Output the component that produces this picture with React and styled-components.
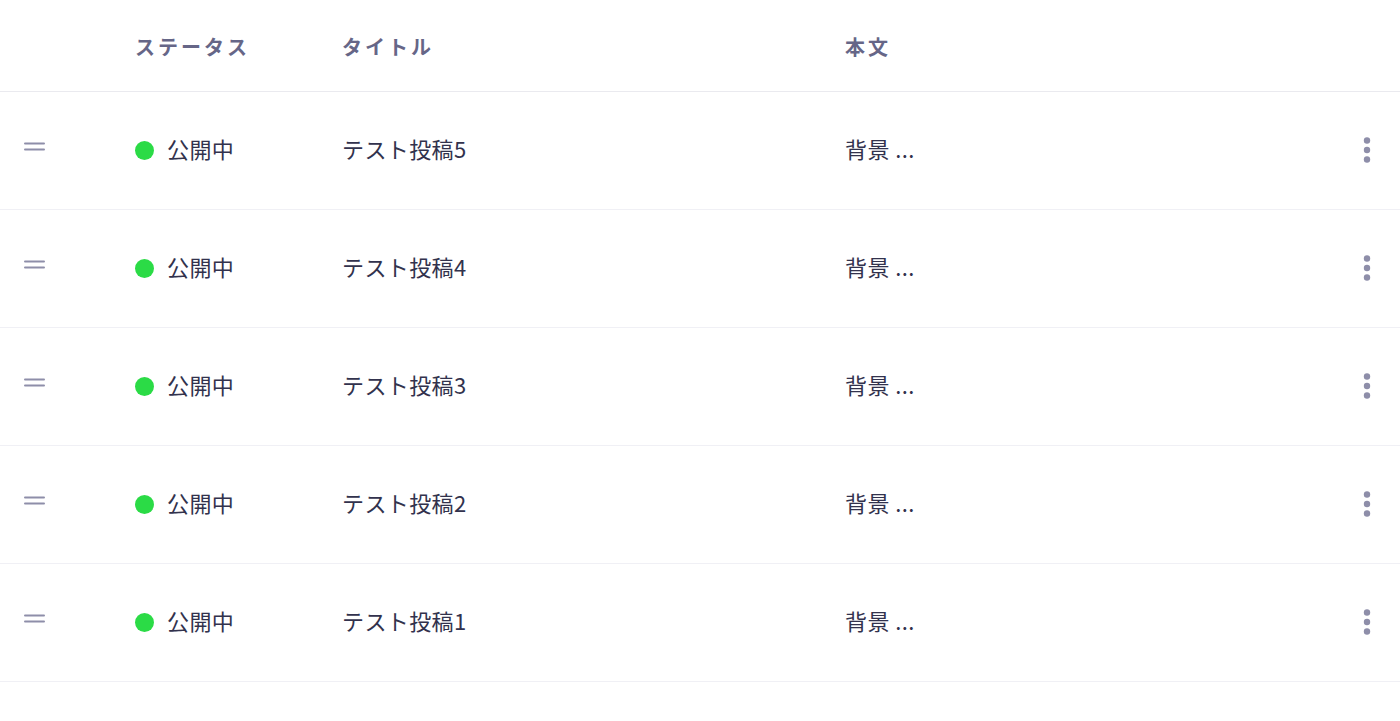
import React from "react";
import styled, { createGlobalStyle } from "styled-components";

const Global = createGlobalStyle`
  html, body { margin: 0; padding: 0; background: #ffffff; }
  body { font-family: "Noto Sans CJK JP", "Noto Sans", sans-serif; }
`;

const Table = styled.div`
  width: 1400px;
  display: flex;
  flex-direction: column;
`;

const cols = "135px 207px 503px 1fr 37px";

const HeaderRow = styled.div`
  display: grid;
  grid-template-columns: ${cols};
  align-items: center;
  height: 91px;
  border-bottom: 1px solid #eaeaef;
`;

const HeadCell = styled.div`
  font-size: 20px;
  font-weight: 700;
  color: #666687;
  letter-spacing: 3px;
  line-height: 1;
  padding-top: 2px;
`;

const Row = styled.div`
  display: grid;
  grid-template-columns: ${cols};
  align-items: center;
  height: 117px;
  border-bottom: 1px solid #f0f0f5;
`;

const DragCell = styled.div`
  padding-left: 24px;
  display: flex;
  align-items: center;
  margin-top: -8px;
`;

const Cell = styled.div`
  font-size: 22px;
  color: #32324d;
  line-height: 1;
  letter-spacing: 0.4px;
  display: flex;
  align-items: center;
  gap: 13px;
  margin-top: -6px;
`;

const Dot = styled.span`
  width: 19px;
  height: 19px;
  border-radius: 50%;
  background: #2bdb46;
  flex: none;
  margin-top: 6px;
`;

const MenuCell = styled.div`
  display: flex;
  justify-content: flex-start;
  margin-top: -2px;
`;

const DragIcon = () => (
  <svg width="21" height="9" viewBox="0 0 21 9">
    <rect x="0" y="0.5" width="21" height="2" rx="1" fill="#8e8ea9" />
    <rect x="0" y="6.5" width="21" height="2" rx="1" fill="#8e8ea9" />
  </svg>
);

const Kebab = () => (
  <svg width="8" height="26" viewBox="0 0 8 26">
    <circle cx="4" cy="3.5" r="3.2" fill="#8e8ea9" />
    <circle cx="4" cy="13" r="3.2" fill="#8e8ea9" />
    <circle cx="4" cy="22.5" r="3.2" fill="#8e8ea9" />
  </svg>
);

const posts = [5, 4, 3, 2, 1];

export default function App() {
  return (
    <>
      <Global />
      <Table>
        <HeaderRow>
          <div />
          <HeadCell>ステータス</HeadCell>
          <HeadCell>タイトル</HeadCell>
          <HeadCell>本文</HeadCell>
          <div />
        </HeaderRow>
        {posts.map((n) => (
          <Row key={n}>
            <DragCell>
              <DragIcon />
            </DragCell>
            <Cell>
              <Dot />
              公開中
            </Cell>
            <Cell>テスト投稿{n}</Cell>
            <Cell>背景 ...</Cell>
            <MenuCell>
              <Kebab />
            </MenuCell>
          </Row>
        ))}
      </Table>
    </>
  );
}
